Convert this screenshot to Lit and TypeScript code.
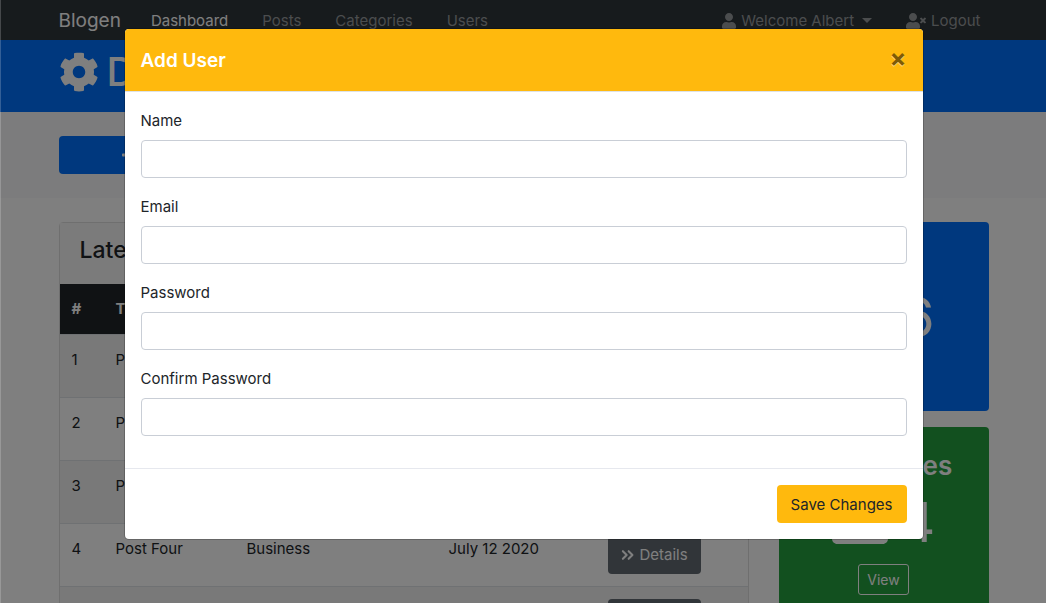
import { LitElement, html, css, svg } from "lit";
import { customElement } from "lit/decorators.js";

const posts = [
  { id: 1, title: "Post One", category: "Web Dev", date: "May 10 2020" },
  { id: 2, title: "Post Two", category: "Tech", date: "May 11 2020" },
  { id: 3, title: "Post Three", category: "Health", date: "June 13 2020" },
  { id: 4, title: "Post Four", category: "Business", date: "July 12 2020" },
  { id: 5, title: "Post Five", category: "Web Dev", date: "July 15 2020" },
];

const fields = [
  { id: "name", label: "Name", type: "text" },
  { id: "email", label: "Email", type: "email" },
  { id: "password", label: "Password", type: "password" },
  { id: "password2", label: "Confirm Password", type: "password" },
];

const icon = (name: string, viewBox: string, shape: unknown) =>
  html`<svg class="icon ${name}" viewBox=${viewBox} aria-hidden="true">${shape}</svg>`;

const user = svg`<path d="M224 256c70.700 0 128-57.300 128-128S294.700 0 224 0 96 57.300 96 128s57.300 128 128 128zm89.600 32h-16.700c-22.200 10.200-46.900 16-72.900 16s-50.600-5.800-72.900-16h-16.700C60.200 288 0 348.200 0 422.400V464c0 26.500 21.500 48 48 48h352c26.500 0 48-21.500 48-48v-41.600c0-74.200-60.200-134.400-134.400-134.400z"/>`;
const cross = svg`<path d="M589.600 240l45.600-45.600c6.300-6.300 6.300-16.500 0-22.800l-22.800-22.800c-6.300-6.300-16.500-6.300-22.800 0L544 194.400l-45.600-45.600c-6.300-6.300-16.500-6.300-22.800 0l-22.800 22.800c-6.300 6.300-6.300 16.500 0 22.800l45.600 45.600-45.600 45.600c-6.300 6.300-6.300 16.500 0 22.800l22.800 22.800c6.300 6.300 16.500 6.300 22.800 0l45.600-45.600 45.600 45.600c6.300 6.300 16.500 6.300 22.800 0l22.800-22.800c6.300-6.300 6.300-16.500 0-22.800z"/>`;
const cog = svg`<path d="M487.400 315.700l-42.600-24.600c4.300-23.200 4.300-47 0-70.200l42.600-24.600c4.900-2.800 7.100-8.600 5.500-14-11.100-35.600-30-67.800-54.700-94.600-3.800-4.100-10-5.100-14.800-2.300L380.800 110c-17.900-15.400-38.500-27.300-60.800-35.100V25.800c0-5.600-3.900-10.500-9.400-11.700-36.700-8.200-74.300-7.800-109.200 0-5.500 1.200-9.400 6.100-9.400 11.700V75c-22.200 7.900-42.800 19.800-60.800 35.100L88.700 85.500c-4.900-2.800-11-1.900-14.800 2.300-24.700 26.700-43.600 58.900-54.700 94.600-1.700 5.400.6 11.200 5.500 14L67.300 221c-4.300 23.200-4.300 47 0 70.200l-42.600 24.600c-4.900 2.800-7.100 8.600-5.500 14 11.100 35.600 30 67.800 54.700 94.600 3.800 4.100 10 5.100 14.800 2.300l42.600-24.600c17.900 15.400 38.500 27.300 60.800 35.100v49.200c0 5.600 3.900 10.500 9.400 11.700 36.700 8.200 74.300 7.800 109.200 0 5.500-1.200 9.400-6.100 9.400-11.700v-49.200c22.200-7.900 42.800-19.800 60.800-35.100l42.600 24.600c4.900 2.800 11 1.900 14.800-2.300 24.700-26.700 43.600-58.900 54.700-94.600 1.500-5.500-.7-11.300-5.600-14.100zM256 336c-44.100 0-80-35.900-80-80s35.900-80 80-80 80 35.900 80 80-35.900 80-80 80z"/>`;
const chevrons = svg`<path fill="none" stroke="currentColor" stroke-width="66" stroke-linecap="round" stroke-linejoin="round" d="M60 135l121 121L60 377M245 135l121 121L245 377"/>`;
const plus = svg`<path d="M416 208H272V64c0-17.700-14.300-32-32-32h-32c-17.700 0-32 14.300-32 32v144H32c-17.700 0-32 14.300-32 32v32c0 17.700 14.300 32 32 32h144v144c0 17.700 14.300 32 32 32h32c17.700 0 32-14.300 32-32V304h144c17.700 0 32-14.300 32-32v-32c0-17.700-14.300-32-32-32z"/>`;
const pencil = svg`<path d="M0 400V512h112L420 204 308 92zM335 65l112 112 50-50c20-20 20-50 0-70l-42-42c-20-20-50-20-70 0z"/>`;
const folder = svg`<path d="M464 128H272l-64-64H48C21.500 64 0 85.500 0 112v288c0 26.500 21.500 48 48 48h416c26.500 0 48-21.500 48-48V176c0-26.500-21.500-48-48-48z"/>`;

@customElement("app-root")
export class AppRoot extends LitElement {
  static styles = css`
    :host {
      display: block;
      position: relative;
      height: 100vh;
      overflow: hidden;
      background: #fff;
      color: #212529;
      font: 400 15px/24px Inter, Roboto, sans-serif;
    }
    * { box-sizing: border-box; }
    h1, h3, h4, h5 { margin: 0; font-weight: 500; }
    a { color: inherit; text-decoration: none; }
    button { font: inherit; border: 0; cursor: pointer; }
    .icon { fill: currentColor; height: 16px; flex: none; }
    .band { padding-left: 1px; }
    .container { max-width: 960px; margin: 0 auto; padding: 0 15px; }
    .navbar { background: #2f363b; color: #969a9c; }
    .navrow { display: flex; align-items: center; height: 40px; }
    .brand { font-size: 19px; line-height: 26px; padding-top: 2px; color: #fff; margin-right: 30px; }
    .links { display: flex; gap: 34px; line-height: 26px; padding-top: 1px; }
    .links.right { margin-left: auto; padding-right: 8px; }
    .links a { display: flex; align-items: center; gap: 5px; }
    .links .active { color: #fff; }
    .caret { margin-left: 3px; border: 5px solid transparent; border-top-color: currentColor; border-bottom: 0; }
    .header { background: #0070fc; color: #fff; }
    .header h1 { display: flex; align-items: center; gap: 8px; height: 72px; padding-bottom: 8px; font-size: 40px; line-height: 48px; }
    .header .icon { height: 40px; }
    .actions { background: #f8f9fa; padding-top: 24px; padding-bottom: 24px; margin-bottom: 24px; }
    .actionrow { display: grid; grid-template-columns: repeat(4, 1fr); gap: 30px; }
    .action { display: flex; align-items: center; justify-content: center; gap: 4px; height: 38px; border-radius: 4px; color: #fff; }
    .primary { background: #0070fc; }
    .success { background: #24a03f; }
    .warning { background: #ffb90d; }
    .main { display: grid; grid-template-columns: 690px 1fr; gap: 30px; align-items: start; }
    .card { border: 1px solid #dfdfdf; border-radius: 4px; }
    .card h4 { padding: 12px 20px; height: 61px; font-size: 23px; line-height: 30px; background: #f7f7f7; }
    table { width: 100%; border-collapse: collapse; table-layout: fixed; }
    th, td { text-align: left; vertical-align: top; padding: 13px 12px 11px; }
    td:last-child { padding: 12px 11px; }
    th { height: 50px; background: #212529; color: #fff; font-weight: 700; }
    td { height: 63px; border-top: 1px solid #dee2e6; }
    tbody tr:nth-child(odd) { background: #f2f2f2; }
    .details { display: inline-flex; align-items: center; gap: 5px; height: 38px; padding: 1px 13px 0; border-radius: 4px; background: #626a72; color: #fff; }
    .stat { display: flex; flex-direction: column; align-items: center; height: 189px; padding: 20px; margin-bottom: 16px; border-radius: 4px; color: #fff; text-align: center; }
    .stat h3 { font-size: 26px; line-height: 38px; margin-bottom: 4px; font-weight: 600; }
    .stat .count { display: flex; align-items: center; gap: 12px; font-size: 55px; line-height: 67px; margin-bottom: 8px; }
    .stat .icon { height: 56px; }
    .view { border: 1px solid #fff; border-radius: 3px; padding: 4px 8px; font-size: 14px; line-height: 21px; }
    .backdrop { position: absolute; inset: 0; background: rgba(0, 0, 0, 0.5); border-left: 1px solid rgba(255, 255, 255, 0.2); }
    .modal { position: absolute; inset: 29px 0 auto 1px; width: calc(100% - 32px); max-width: 798px; margin: 0 auto; background: #fff; border-radius: 4px; overflow: hidden; box-shadow: 0 0 0 1px rgba(0, 0, 0, 0.2); }
    .modal header { display: flex; justify-content: space-between; align-items: center; height: 63px; padding: 0 16px; background: #ffb90d; color: #fff; border-bottom: 1px solid #dee2e6; }
    .modal h5 { padding-top: 2px; font-size: 19px; line-height: 30px; font-weight: 600; }
    .close { padding: 0 0 4px; width: 17px; background: none; font-size: 25px; line-height: 24px; font-weight: 700; color: #000; opacity: 0.5; text-shadow: 0 1px 0 #fff; }
    .body { padding: 16px; }
    .group { margin-bottom: 16px; }
    .group label { display: block; line-height: 26px; margin-bottom: 6px; }
    .group input { display: block; width: 100%; height: 38px; padding: 6px 12px; border: 1px solid #c9ced6; border-radius: 4px; font: inherit; }
    .modal footer { display: flex; justify-content: flex-end; padding: 16px; border-top: 1px solid #e6e8ee; }
    .save { height: 38px; padding: 2px 14px 0; border-radius: 4px; color: #212529; }
  `;

  private stat(kind: string, title: string, glyph: unknown, count: number) {
    return html`<section class="stat ${kind}">
      <h3>${title}</h3>
      <div class="count">${glyph}${count}</div>
      <a class="view" href="#">View</a>
    </section>`;
  }

  render() {
    return html`
      <nav class="band navbar">
        <div class="container navrow">
          <a class="brand" href="#">Blogen</a>
          <div class="links">
            <a class="active" href="#">Dashboard</a><a href="#">Posts</a><a href="#">Categories</a><a href="#">Users</a>
          </div>
          <div class="links right">
            <a href="#">${icon("user", "0 0 448 512", user)}Welcome Albert<span class="caret"></span></a>
            <a href="#">${icon("logout", "0 0 640 512", svg`${user}${cross}`)}Logout</a>
          </div>
        </div>
      </nav>
      <header class="band header">
        <div class="container"><h1>${icon("cog", "0 0 512 512", cog)}Dashboard</h1></div>
      </header>
      <section class="band actions">
        <div class="container actionrow">
          <a class="action primary" href="#">${icon("plus", "0 0 448 512", plus)}Add Post</a>
          <a class="action success" href="#">${icon("plus", "0 0 448 512", plus)}Add Category</a>
          <a class="action warning" href="#">${icon("plus", "0 0 448 512", plus)}Add User</a>
        </div>
      </section>
      <div class="band">
        <main class="container main">
          <section class="card">
            <h4>Latest Posts</h4>
            <table>
              <colgroup><col style="width:44px" /><col style="width:131px" /><col style="width:202px" /><col style="width:160px" /><col /></colgroup>
              <thead><tr><th>#</th><th>Title</th><th>Category</th><th>Date</th><th></th></tr></thead>
              <tbody>
                ${posts.map((p) => html`<tr>
                  <td>${p.id}</td><td>${p.title}</td><td>${p.category}</td><td>${p.date}</td>
                  <td><a class="details" href="#">${icon("chevrons", "0 0 448 512", chevrons)}Details</a></td>
                </tr>`)}
              </tbody>
            </table>
          </section>
          <aside>
            ${this.stat("primary", "Posts", icon("pencil", "0 0 512 512", pencil), 6)}
            ${this.stat("success", "Categories", icon("folder", "0 0 512 512", folder), 4)}
          </aside>
        </main>
      </div>
      <div class="backdrop"></div>
      <div class="modal" role="dialog" aria-modal="true" aria-labelledby="title">
        <header>
          <h5 id="title">Add User</h5>
          <button class="close" aria-label="Close">×</button>
        </header>
        <form class="body" id="user-form">
          ${fields.map((f) => html`<div class="group">
            <label for=${f.id}>${f.label}</label>
            <input id=${f.id} type=${f.type} />
          </div>`)}
        </form>
        <footer><button class="save warning" type="button">Save Changes</button></footer>
      </div>
    `;
  }
}
